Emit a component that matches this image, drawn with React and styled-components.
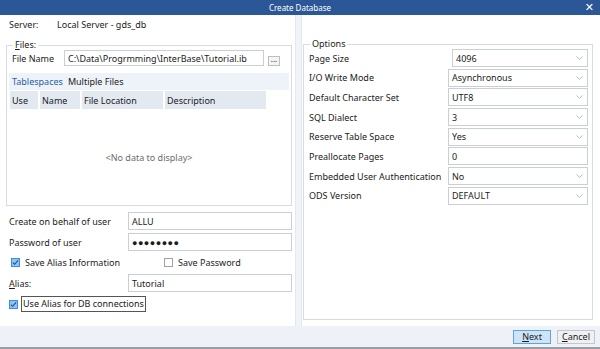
import React from 'react'
import styled, { createGlobalStyle } from 'styled-components'

const Global = createGlobalStyle`
  html, body { margin:0; padding:0; }
  body { font-family:"Noto Sans", "Liberation Sans", sans-serif; font-size:9px; color:#1b1b1b; background:#fff; }
  * { box-sizing:border-box; }
  fieldset { margin:0; min-width:0; }
  label { white-space:nowrap; }
`

const Win = styled.div`
  width:600px;
  height:349px;
  display:flex;
  flex-direction:column;
  background:#fff;
  border-bottom:2px solid #9a9da3;
  overflow:hidden;
`
const TitleBar = styled.div`
  height:15px;
  flex:none;
  background:#2b5797;
  color:#fff;
  font-size:8px;
  display:flex;
  align-items:center;
  justify-content:center;
  position:relative;
  .close{
    position:absolute;
    right:6px;
    top:1px;
    font-size:11px;
    font-weight:bold;
    font-family:"DejaVu Sans", sans-serif;
  }
`
const Main = styled.div`
  flex:1;
  display:flex;
  min-height:0;
`
const LeftPane = styled.div`
  width:295px;
  padding:1px 3px 0 6px;
  display:flex;
  flex-direction:column;
`
const Splitter = styled.div`
  width:7px;
  background:#f0f4f9;
  border-left:1px solid #e4e9f0;
  border-right:1px solid #e4e9f0;
`
const RightPane = styled.div`
  flex:1;
  padding:24px 7px 6px 1px;
  display:flex;
`
const ServerRow = styled.div`
  display:flex;
  height:17px;
  align-items:center;
  padding-left:3px;
  span:first-child{ width:48px; }
`
const Group = styled.fieldset`
  border:1px solid #d6dce4;
  margin-top:${p => p.$mt || 0}px;
  padding:${p => p.$pad || '0 2px 0 2px'};
  flex:${p => p.$grow ? 1 : 'none'};
  legend{
    padding:0 2px;
    margin-left:4px;
    line-height:10px;
  }
`
const FileRow = styled.div`
  display:flex;
  align-items:center;
  height:16px;
  padding:0 9px 0 3px;
  label{ width:52px; }
`
const Field = styled.div`
  height:${p => p.$h || 18}px;
  width:${p => p.$w ? p.$w + 'px' : 'auto'};
  flex:${p => p.$w ? 'none' : 1};
  border:1px solid #c9cfd7;
  background:#fff;
  display:flex;
  align-items:center;
  padding-left:${p => p.$pl || 3}px;
  letter-spacing:${p => p.$ls || 0};
  white-space:nowrap;
  overflow:hidden;
`
const DotsBtn = styled.div`
  width:12px;
  height:10px;
  margin:5px 0 0 4px;
  border:1px solid #b9bfc7;
  background:#f4f4f4;
  font-size:8px;
  line-height:4px;
  text-align:center;
`
const Tabs = styled.div`
  margin-top:7px;
  height:17px;
  background:#eef3fa;
  display:flex;
  align-items:center;
  gap:5px;
  padding-left:3px;
`
const Tab = styled.span`
  color:${p => p.$active ? '#1e5fa8' : '#1b1b1b'};
`
const HeadRow = styled.div`
  display:flex;
  gap:2px;
  height:18px;
  margin-top:1px;
  padding-left:1px;
`
const HeadCell = styled.div`
  width:${p => p.$w}px;
  background:#e3e9f1;
  display:flex;
  align-items:center;
  padding-left:2px;
`
const Empty = styled.div`
  height:96px;
  display:flex;
  align-items:center;
  justify-content:center;
  color:#6d6d6d;
`
const Form = styled.div`
  display:flex;
  flex-direction:column;
  padding:6px 0 0 3px;
  gap:3px;
`
const FormRow = styled.div`
  display:flex;
  align-items:center;
  label{ width:119px; }
`
const CheckRow = styled.div`
  display:flex;
  align-items:center;
  height:${p => p.$h || 18}px;
  padding-left:${p => p.$pl || 0}px;
`
const CheckItem = styled.div`
  display:flex;
  align-items:center;
  gap:3px;
  width:${p => p.$w ? p.$w + 'px' : 'auto'};
  span.text{
    border:${p => p.$focus ? '1px solid #555' : '1px solid transparent'};
    padding:0 1px;
    line-height:14px;
  }
`
const Box = styled.span`
  width:9px;
  height:9px;
  border:1px solid ${p => p.$on ? '#3a8ee6' : '#9aa3ad'};
  background:${p => p.$on ? '#8fc4f2' : '#fff'};
  display:inline-flex;
  align-items:center;
  justify-content:center;
`
const U = styled.span`
  text-decoration:underline;
`
const OptRows = styled.div`
  display:flex;
  flex-direction:column;
  gap:1.7px;
  padding:0 0 0 3px;
`
const OptRow = styled.div`
  display:flex;
  align-items:center;
  height:18px;
  label{ width:${p => p.$indent ? 143 : 139}px; }
`
const Combo = styled(Field)`
  justify-content:space-between;
  padding-right:4px;
`
const Footer = styled.div`
  height:21px;
  flex:none;
  background:#eef2f8;
  display:flex;
  justify-content:flex-end;
  align-items:center;
  gap:6px;
  padding-right:5px;
`
const Btn = styled.div`
  width:38px;
  height:14px;
  border:1px solid ${p => p.$primary ? '#5fa2dd' : '#c3c7cc'};
  background:${p => p.$primary ? '#cde4f7' : '#eef0f2'};
  display:flex;
  align-items:center;
  justify-content:center;
`

const Chevron = () => (
  <svg width="7" height="4" viewBox="0 0 7 4"><path d="M0.5 0.5 L3.5 3.3 L6.5 0.5" fill="none" stroke="#9a9fa6" strokeWidth="0.7" /></svg>
)

const Check = ({ on }) => (
  <Box $on={on}>
    {on && <svg width="8" height="7" viewBox="0 0 8 7"><path d="M1 3.6 L3 5.6 L7 1" fill="none" stroke="#1c4f8c" strokeWidth="1.2" /></svg>}
  </Box>
)

const options = [
  ['Page Size', '4096', true, true],
  ['I/O Write Mode', 'Asynchronous', true],
  ['Default Character Set', 'UTF8', true],
  ['SQL Dialect', '3', true],
  ['Reserve Table Space', 'Yes', true],
  ['Preallocate Pages', '0', false],
  ['Embedded User Authentication', 'No', true],
  ['ODS Version', 'DEFAULT', true],
]

function App() {
  return (
    <Win>
      <Global />
      <TitleBar>Create Database<span className='close'>✕</span></TitleBar>
      <Main>
        <LeftPane>
          <ServerRow><span>Server:</span><span>Local Server - gds_db</span></ServerRow>
          <Group $mt={7}>
            <legend><U>F</U>iles:</legend>
            <FileRow>
              <label>File Name</label>
              <Field $h={16}>C:\Data\Progrmming\InterBase\Tutorial.ib</Field>
              <DotsBtn>...</DotsBtn>
            </FileRow>
            <Tabs>
              <Tab $active>Tablespaces</Tab>
              <Tab>Multiple Files</Tab>
            </Tabs>
            <HeadRow>
              <HeadCell $w={28}>Use</HeadCell>
              <HeadCell $w={40}>Name</HeadCell>
              <HeadCell $w={81}>File Location</HeadCell>
              <HeadCell $w={101}>Description</HeadCell>
            </HeadRow>
            <Empty>&lt;No data to display&gt;</Empty>
          </Group>
          <Form>
            <FormRow><label>Create on behalf of user</label><Field>ALLU</Field></FormRow>
            <FormRow><label>Password of user</label><Field $ls="0.5px">●●●●●●●●</Field></FormRow>
            <CheckRow $pl={2} $h={17}>
              <CheckItem $w={153}><Check on /><span className='text'>Save Alias Information</span></CheckItem>
              <CheckItem><Check /><span className='text'>Save Password</span></CheckItem>
            </CheckRow>
            <FormRow><label><U>A</U>lias:</label><Field>Tutorial</Field></FormRow>
            <CheckRow>
              <CheckItem $focus><Check on /><span className='text'>Use Alias for DB connections</span></CheckItem>
            </CheckRow>
          </Form>
        </LeftPane>
        <Splitter />
        <RightPane>
          <Group $grow $pad="0 4px 0 2px">
            <legend>Options</legend>
            <OptRows>
              {options.map(([label, value, combo, indent]) => (
                <OptRow key={label} $indent={indent}>
                  <label>{label}</label>
                  {combo
                    ? <Combo>{value}<Chevron /></Combo>
                    : <Field>{value}</Field>}
                </OptRow>
              ))}
            </OptRows>
          </Group>
        </RightPane>
      </Main>
      <Footer>
        <Btn $primary><U>N</U>ext</Btn>
        <Btn><U>C</U>ancel</Btn>
      </Footer>
    </Win>
  )
}

export default App
